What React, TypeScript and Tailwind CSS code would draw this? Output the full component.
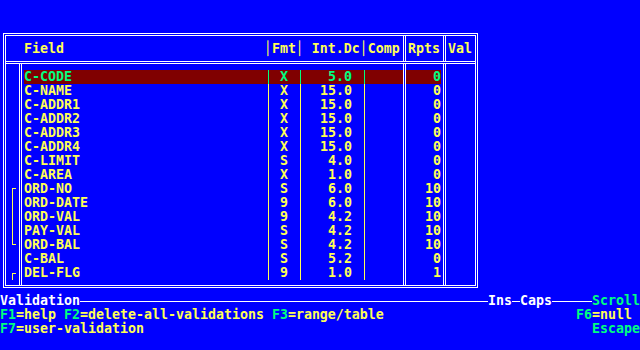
const fields = [
  { name: "C-CODE", fmt: "X", dc: "5.0", rpts: "0" },
  { name: "C-NAME", fmt: "X", dc: "15.0", rpts: "0" },
  { name: "C-ADDR1", fmt: "X", dc: "15.0", rpts: "0" },
  { name: "C-ADDR2", fmt: "X", dc: "15.0", rpts: "0" },
  { name: "C-ADDR3", fmt: "X", dc: "15.0", rpts: "0" },
  { name: "C-ADDR4", fmt: "X", dc: "15.0", rpts: "0" },
  { name: "C-LIMIT", fmt: "S", dc: "4.0", rpts: "0" },
  { name: "C-AREA", fmt: "X", dc: "1.0", rpts: "0" },
  { name: "ORD-NO", fmt: "S", dc: "6.0", rpts: "10" },
  { name: "ORD-DATE", fmt: "9", dc: "6.0", rpts: "10" },
  { name: "ORD-VAL", fmt: "9", dc: "4.2", rpts: "10" },
  { name: "PAY-VAL", fmt: "S", dc: "4.2", rpts: "10" },
  { name: "ORD-BAL", fmt: "S", dc: "4.2", rpts: "10" },
  { name: "C-BAL", fmt: "S", dc: "5.2", rpts: "0" },
  { name: "DEL-FLG", fmt: "9", dc: "1.0", rpts: "1" },
];

function Key({ k, label }: { k: string; label: string }) {
  return (
    <span>
      <span className="text-[#00ff80]">{k}</span>
      {label}
    </span>
  );
}

export default function App() {
  return (
    <div className="w-[640px] h-[350px] overflow-hidden bg-[#0000ff] text-[#ffff55] font-['DejaVu_Sans_Mono',monospace] font-bold text-[13.29px] leading-[14px] whitespace-pre">
      <div className="h-[294px] pt-[33px] pl-[3px]">
        <div className="w-[475px] h-[255px] border-[3px] border-double border-white flex flex-col">
          {/* header */}
          <div className="flex h-[28px] border-b-[3px] border-double border-white">
            <div className="w-[397px] pt-[6px] pl-[18px]">
              {"Field" + " ".repeat(25)}│Fmt│ Int.Dc│Comp
            </div>
            <div className="w-[40px] border-l-[3px] border-double border-white pt-[6px] pl-[2px]">Rpts</div>
            <div className="w-[32px] border-l-[3px] border-double border-white pt-[6px] pl-[2px]">Val</div>
          </div>

          {/* body */}
          <div className="flex flex-1">
            <div className="w-[13px] flex flex-col">
              <div className="mt-[124px] ml-[6px] w-[4px] h-[57px] border-l border-y border-[#ffff55]" />
              <div className="mt-[28px] ml-[6px] w-[4px] h-[7px] border-l border-t border-[#ffff55]" />
            </div>

            <div className="w-[384px] border-l-[3px] border-double border-white pt-[6px] flex flex-col">
              {fields.map((f, i) => {
                const hl = i === 0;
                return (
                  <div key={f.name} className={hl ? "flex h-[14px] text-[#00ff80]" : "flex h-[14px]"}>
                    <div className={hl ? "w-[244px] ml-[2px] bg-[#800000]" : "w-[244px] ml-[2px]"}>{f.name}</div>
                    <div className={hl ? "w-[32px] pl-[11px] border-l border-[#00ff80] bg-[#800000]" : "w-[32px] pl-[11px] border-l border-[#ffff55]"}>
                      {f.fmt}
                    </div>
                    <div className={hl ? "w-[64px] pr-[12px] text-right border-l border-[#00ff80] bg-[#800000]" : "w-[64px] pr-[12px] text-right border-l border-[#ffff55]"}>
                      {f.dc}
                    </div>
                    <div className={hl ? "w-[39px] border-l border-[#00ff80] bg-[#800000]" : "w-[39px] border-l border-[#ffff55]"} />
                  </div>
                );
              })}
            </div>

            <div className="w-[40px] border-l-[3px] border-double border-white pt-[6px] flex flex-col">
              {fields.map((f, i) => (
                <div
                  key={f.name}
                  className={i === 0 ? "h-[14px] mr-[2px] text-right bg-[#800000] text-[#00ff80]" : "h-[14px] mr-[2px] text-right"}
                >
                  {f.rpts}
                </div>
              ))}
            </div>

            <div className="w-[32px] border-l-[3px] border-double border-white" />
          </div>
        </div>
      </div>

      {/* status lines */}
      <div className="flex h-[14px] text-white">
        <span>Validation</span>
        <div className="w-[408px] h-[1px] mt-[7px] bg-white" />
        <span>Ins</span>
        <div className="w-[8px] h-[1px] mt-[7px] bg-white" />
        <span>Caps</span>
        <div className="w-[40px] h-[1px] mt-[7px] bg-white" />
        <span className="ml-auto text-[#00ff80]">Scroll</span>
      </div>
      <div className="flex h-[14px]">
        <span>
          <Key k="F1" label="=help " />
          <Key k="F2" label="=delete-all-validations " />
          <Key k="F3" label="=range/table" />
        </span>
        <span className="ml-auto mr-[8px]">
          <Key k="F6" label="=null" />
        </span>
      </div>
      <div className="flex h-[14px]">
        <Key k="F7" label="=user-validation" />
        <span className="ml-auto text-[#00ff80]">Escape</span>
      </div>
    </div>
  );
}
